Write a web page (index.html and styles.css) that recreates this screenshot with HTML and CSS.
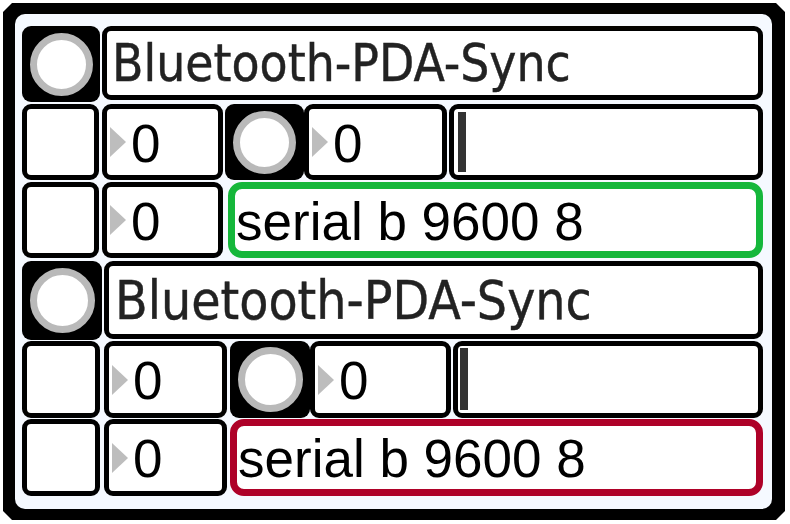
FILE: index.html
```html
<!DOCTYPE html>
<html>
<head>
<meta charset="utf-8">
<title>Bluetooth-PDA-Sync</title>
<link rel="stylesheet" href="styles.css">
</head>
<body>
<div class="frame">
  <div class="canvas">
    <div class="group g1">
      <div class="row row-title">
        <div class="toggle"><span class="ring"></span></div>
        <div class="box label">Bluetooth-PDA-Sync</div>
      </div>
      <div class="row">
        <div class="box bang"></div>
        <div class="box num num-a"><span class="tri"></span><span class="val">0</span></div>
        <div class="toggle tog-mid"><span class="ring"></span></div>
        <div class="box num num-b"><span class="tri"></span><span class="val">0</span></div>
        <div class="box slider"><span class="knob"></span></div>
      </div>
      <div class="row">
        <div class="box bang"></div>
        <div class="box num num-a"><span class="tri"></span><span class="val">0</span></div>
        <div class="box msg msg-green">serial b 9600 8</div>
      </div>
    </div>
    <div class="group g2">
      <div class="row row-title">
        <div class="toggle"><span class="ring"></span></div>
        <div class="box label">Bluetooth-PDA-Sync</div>
      </div>
      <div class="row">
        <div class="box bang"></div>
        <div class="box num num-a"><span class="tri"></span><span class="val">0</span></div>
        <div class="toggle tog-mid"><span class="ring"></span></div>
        <div class="box num num-b"><span class="tri"></span><span class="val">0</span></div>
        <div class="box slider"><span class="knob"></span></div>
      </div>
      <div class="row">
        <div class="box bang"></div>
        <div class="box num num-a"><span class="tri"></span><span class="val">0</span></div>
        <div class="box msg msg-red">serial b 9600 8</div>
      </div>
    </div>
  </div>
</div>
</body>
</html>
```

FILE: styles.css
```css
* { box-sizing: border-box; }

html, body {
  margin: 0;
  padding: 0;
  background: #ffffff;
  width: 790px;
  height: 524px;
  overflow: hidden;
}

.frame {
  margin: 3px 0 0 3px;
  width: 782px;
  height: 517px;
  background: #000;
  padding: 11px 13px 11px 12px;
  clip-path: polygon(9px 0, calc(100% - 9px) 0, 100% 9px, 100% calc(100% - 9px), calc(100% - 9px) 100%, 9px 100%, 0 calc(100% - 9px), 0 9px);
}

.canvas {
  width: 100%;
  height: 100%;
  background: #f5f9ff;
  border-radius: 10px;
  padding: 12px 9px 0 7px;
  display: flex;
  flex-direction: column;
}

.group {
  display: flex;
  flex-direction: column;
}

.g1 { gap: 2px; }
.g2 { gap: 1px; margin-top: 3px; }

.row {
  display: flex;
  align-items: stretch;
}

.g1 .row { height: 76px; }
.g2 .row { height: 77px; }
.g2 .row-title { height: 79px; }

.box {
  background: #fff;
  border: 5px solid #000;
  border-radius: 9px;
}

.toggle {
  background: #000;
  border-radius: 9px;
  display: flex;
  align-items: center;
  justify-content: center;
  flex: none;
}

.ring {
  display: block;
  flex: none;
  border-radius: 50%;
  background: #fff;
  border: 7px solid #b9b9b9;
}

.g1 .toggle { width: 78px; }
.g1 .ring { width: 63px; height: 63px; }
.g2 .toggle { width: 80px; }
.g2 .ring { width: 65px; height: 65px; }

.g1 .tog-mid { width: 79px; margin-left: 2px; }
.g2 .tog-mid { width: 80px; margin-left: 3px; }

.label {
  flex: 1;
  margin-left: 2px;
  font-family: "DejaVu Sans Condensed", "DejaVu Sans", sans-serif;
  color: #222;
  display: flex;
  align-items: center;
  padding-left: 5px;
  padding-top: 1px;
  white-space: nowrap;
  -webkit-text-stroke: 0.4px #222;
}

.g1 .label { font-size: 51px; height: 74px; }
.g2 .label { font-size: 53px; height: 78px; padding-left: 6px; }

.bang { flex: none; }
.g1 .bang { width: 77px; }
.g2 .bang { width: 78px; }

.num {
  flex: none;
  display: flex;
  align-items: center;
  padding-left: 3px;
  padding-top: 2px;
  font-family: "Liberation Sans", Arial, sans-serif;
  font-size: 53px;
  line-height: 1;
  color: #000;
}

.g1 .num-a { width: 121px; margin-left: 3px; }
.g2 .num-a { width: 123px; margin-left: 4px; }
.g1 .num-b { width: 143px; }
.g2 .num-b { width: 141px; }

.tri {
  display: block;
  flex: none;
  width: 0;
  height: 0;
  border-top: 15px solid transparent;
  border-bottom: 15px solid transparent;
  border-left: 16px solid #bdbdbd;
  margin-right: 5px;
  margin-top: -2px;
}

.slider {
  flex: 1;
  margin-left: 2px;
  padding: 3px 4px;
}

.knob {
  display: block;
  width: 8px;
  height: 100%;
  background: #333;
}

.g2 .slider { padding: 2px 2px 3px 2px; }

.msg {
  flex: 1;
  border-width: 7px;
  border-radius: 14px;
  display: flex;
  align-items: center;
  padding-left: 1px;
  padding-top: 2px;
  font-family: "Liberation Sans", Arial, sans-serif;
  font-size: 53px;
  line-height: 1;
  color: #000;
  white-space: nowrap;
}

.g1 .msg { margin-left: 5px; }
.g2 .msg { margin-left: 3px; }

.msg-green { border-color: #15b73b; }
.msg-red { border-color: #ae0128; }
```
